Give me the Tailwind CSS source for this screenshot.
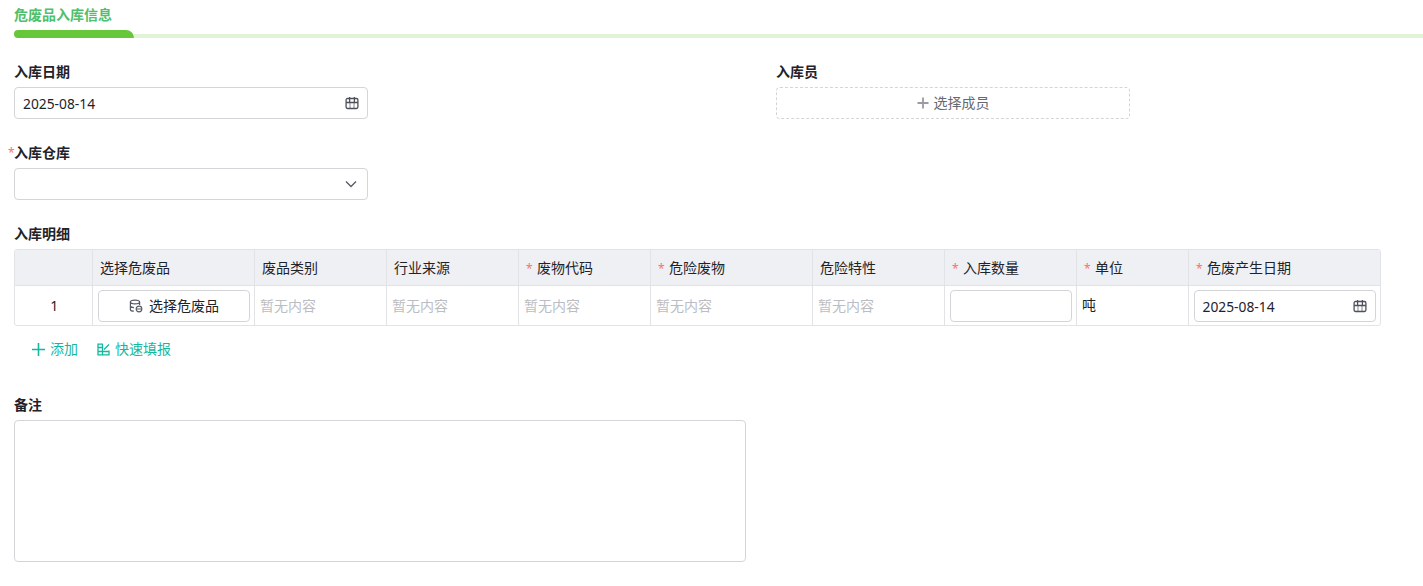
<!DOCTYPE html>
<html lang="zh-CN">
<head>
  <meta charset="UTF-8" />
  <title>危废品入库信息</title>
  <script src="https://cdn.jsdelivr.net/npm/@tailwindcss/browser@4"></script>
</head>
<body class="bg-white text-[#1f2329] text-sm font-['Noto_Sans','Noto_Sans_CJK_SC',sans-serif] overflow-hidden">
  <div class="h-[586px] overflow-hidden">
    <!-- 标题 -->
    <div class="h-[30px] pl-[14px] pt-[5px] leading-[20px] font-bold text-[#4fc06c]">危废品入库信息</div>
    <div class="h-2 flex items-end pl-[14px]">
      <div class="w-[120px] h-2 bg-[#67c73a] rounded-tr-lg rounded-l-sm shrink-0"></div>
      <div class="flex-1 h-1 bg-[#e1f4d8]"></div>
    </div>

    <div class="pl-[14px]">
      <div class="grid grid-cols-[762px_354px] pt-6">
        <div>
          <label class="block h-[20px] leading-[20px] font-bold mb-[5px]">入库日期</label>
          <div class="w-[354px] h-8 border border-[#d4d5d9] rounded flex items-center justify-between pl-2 pr-[8px]">
            <span class="relative top-[1px] text-[13.8px]">2025-08-14</span>
            <svg class="w-[14px] h-[14px] text-[#4d515c]" viewBox="0 0 14 14" fill="none" stroke="currentColor" stroke-width="1.3"><path d="M2.5 2.5h9a1.4 1.4 0 0 1 1.4 1.4v7.2a1.4 1.4 0 0 1-1.4 1.4h-9a1.4 1.4 0 0 1-1.4-1.4V3.9a1.4 1.4 0 0 1 1.4-1.4z"/><path d="M1.1 6.5h11.8M4.6 1v5.5M9.4 1v5.5"/><path d="M5 6.5v6M9 6.5v6" stroke-width="0.7"/></svg>
          </div>
        </div>
        <div>
          <label class="block h-[20px] leading-[20px] font-bold mb-[5px]">入库员</label>
          <div class="h-8 border border-dashed border-[#d4d5d9] rounded flex items-center justify-center gap-[5px] text-[#646a73]">
            <svg class="w-3 h-3 text-[#9a9ca5]" viewBox="0 0 12 12" fill="none" stroke="currentColor" stroke-width="1.8"><path d="M6 0.5v11M0.5 6h11"/></svg>
            <span>选择成员</span>
          </div>
        </div>
      </div>

      <div class="mt-[24px]">
        <label class="relative block h-[20px] leading-[20px] font-bold mb-[5px]"><span class="absolute left-[-6px] top-[2px] text-[#f87171] font-normal text-xs">*</span>入库仓库</label>
        <div class="w-[354px] h-8 border border-[#d4d5d9] rounded flex items-center justify-end pr-[10px]">
          <svg class="w-3 h-2 text-[#565a66]" viewBox="0 0 12 8" fill="none" stroke="currentColor" stroke-width="1.3"><path d="M1 1.5l5 5 5-5"/></svg>
        </div>
      </div>

      <label class="block mt-[24px] h-[20px] leading-[20px] font-bold mb-[5px]">入库明细</label>
      <div class="w-[1367px] border border-[#e2e3e7] rounded-[3px] overflow-hidden">
        <table class="table-fixed w-[1365px] border-collapse">
          <colgroup>
            <col class="w-[77px]" /><col class="w-[162px]" /><col class="w-[132px]" /><col class="w-[132px]" /><col class="w-[132px]" /><col class="w-[162px]" /><col class="w-[132px]" /><col class="w-[132px]" /><col class="w-[112px]" /><col class="w-[192px]" />
          </colgroup>
          <thead>
            <tr class="h-[35px] bg-[#eff0f4] text-left border-b border-[#e2e3e7]">
              <th class="font-normal border-r border-[#e2e3e7]"></th>
              <th class="font-normal border-r border-[#e2e3e7] pl-[7.5px] pt-[1px]">选择危废品</th>
              <th class="font-normal border-r border-[#e2e3e7] pl-[7.5px] pt-[1px]">废品类别</th>
              <th class="font-normal border-r border-[#e2e3e7] pl-[7.5px] pt-[1px]">行业来源</th>
              <th class="font-normal border-r border-[#e2e3e7] pl-[7.5px] pt-[1px]"><span class="inline-block w-[11px] text-xs text-[#f87171]">*</span>废物代码</th>
              <th class="font-normal border-r border-[#e2e3e7] pl-[7.5px] pt-[1px]"><span class="inline-block w-[11px] text-xs text-[#f87171]">*</span>危险废物</th>
              <th class="font-normal border-r border-[#e2e3e7] pl-[7.5px] pt-[1px]">危险特性</th>
              <th class="font-normal border-r border-[#e2e3e7] pl-[7.5px] pt-[1px]"><span class="inline-block w-[11px] text-xs text-[#f87171]">*</span>入库数量</th>
              <th class="font-normal border-r border-[#e2e3e7] pl-[7.5px] pt-[1px]"><span class="inline-block w-[11px] text-xs text-[#f87171]">*</span>单位</th>
              <th class="font-normal pl-[7.5px] pt-[1px]"><span class="inline-block w-[11px] text-xs text-[#f87171]">*</span>危废产生日期</th>
            </tr>
          </thead>
          <tbody>
            <tr class="h-[40px]">
              <td class="border-r border-[#e2e3e7] text-center pt-[1px]"><span class="relative left-[1px]">1</span></td>
              <td class="border-r border-[#e2e3e7] pl-[5px] pr-[4px] pt-[1px]">
                <div class="h-8 border border-[#d4d5d9] rounded flex items-center justify-center gap-[5px]">
                  <svg class="w-[14px] h-[14px] text-[#565a66]" viewBox="0 0 14 14" fill="none" stroke="currentColor" stroke-width="1.2"><ellipse cx="6" cy="3" rx="4.6" ry="1.9"/><path d="M1.4 3v7.4c0 1 1.6 1.7 3.4 1.8M1.4 6.8c0 1 1.6 1.7 3.6 1.8M10.6 3v3"/><circle cx="10" cy="10" r="2.8"/><path d="M8 10h4"/></svg>
                  <span class="relative left-[1px]">选择危废品</span>
                </div>
              </td>
              <td class="border-r border-[#e2e3e7] pl-[5.5px] pt-[1px] text-[#bbbdc2]">暂无内容</td>
              <td class="border-r border-[#e2e3e7] pl-[5.5px] pt-[1px] text-[#bbbdc2]">暂无内容</td>
              <td class="border-r border-[#e2e3e7] pl-[5.5px] pt-[1px] text-[#bbbdc2]">暂无内容</td>
              <td class="border-r border-[#e2e3e7] pl-[5.5px] pt-[1px] text-[#bbbdc2]">暂无内容</td>
              <td class="border-r border-[#e2e3e7] pl-[5.5px] pt-[1px] text-[#bbbdc2]">暂无内容</td>
              <td class="border-r border-[#e2e3e7] pl-[5px] pr-[4px] pt-[1px]"><div class="h-8 border border-[#d4d5d9] rounded"></div></td>
              <td class="border-r border-[#e2e3e7] pl-[5.5px]">吨</td>
              <td class="pl-[5px] pr-[4px] pt-[1px]">
                <div class="h-8 border border-[#d4d5d9] rounded flex items-center justify-between pl-2 pr-[8px]">
                  <span class="relative top-[1px] text-[13.8px]">2025-08-14</span>
                  <svg class="w-[14px] h-[14px] text-[#4d515c]" viewBox="0 0 14 14" fill="none" stroke="currentColor" stroke-width="1.3"><path d="M2.5 2.5h9a1.4 1.4 0 0 1 1.4 1.4v7.2a1.4 1.4 0 0 1-1.4 1.4h-9a1.4 1.4 0 0 1-1.4-1.4V3.9a1.4 1.4 0 0 1 1.4-1.4z"/><path d="M1.1 6.5h11.8M4.6 1v5.5M9.4 1v5.5"/><path d="M5 6.5v6M9 6.5v6" stroke-width="0.7"/></svg>
                </div>
              </td>
            </tr>
          </tbody>
        </table>
      </div>

      <div class="flex items-center h-[20px] mt-[13px] pl-[18px] text-[#14b8a0]">
        <svg class="w-[13px] h-[13px] mr-[5px]" viewBox="0 0 13 13" fill="none" stroke="currentColor" stroke-width="1.6"><path d="M6.5 0v13M0 6.5h13"/></svg>
        <span>添加</span>
        <svg class="w-[13px] h-[13px] ml-[19px] mr-[5px]" viewBox="0 0 13 13" fill="none" stroke="currentColor" stroke-width="1.3"><path d="M6 1.2H1v10.6h11V7.5M1 4.5h4M1 8.5h11M5.5 1.2v10.6M7 6.5l5-5"/></svg>
        <span>快速填报</span>
      </div>

      <label class="block mt-[36px] h-[20px] leading-[20px] font-bold mb-[5px]">备注</label>
      <div class="w-[732px] h-[142px] border border-[#d4d5d9] rounded"></div>
    </div>
  </div>
</body>
</html>
